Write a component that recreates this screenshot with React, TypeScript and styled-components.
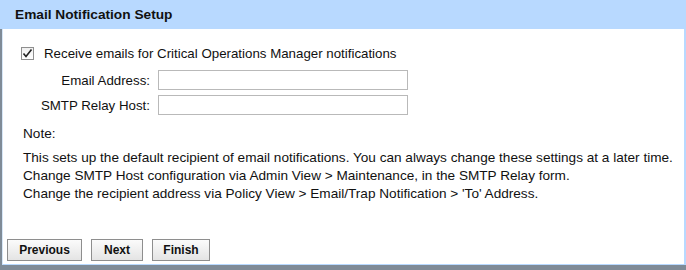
import React from "react";
import styled, { createGlobalStyle } from "styled-components";

const Global = createGlobalStyle`
  html, body { margin: 0; padding: 0; background: #c9ced4; }
  body { font-family: "Liberation Sans", Arial, sans-serif; }
`;

const Page = styled.div`
  width: 686px;
  height: 270px;
  display: flex;
  flex-direction: column;
  background: #7f8b97;
  overflow: hidden;
`;

const Panel = styled.div`
  margin-left: 2px;
  height: 265px;
  display: flex;
  flex-direction: column;
  background: #ffffff;
  border-left: 1px solid #d6e6f7;
  border-right: 2px solid #b8d9ff;
  border-bottom: 1px solid #b8d9ff;
  box-sizing: border-box;
`;

const Header = styled.div`
  height: 29px;
  margin-left: -3px;
  margin-right: -2px;
  padding-left: 15px;
  background: #b8d9ff;
  display: flex;
  align-items: center;
  font-weight: bold;
  font-size: 13.7px;
  color: #111;
`;

const Body = styled.div`
  flex: 1;
  display: flex;
  flex-direction: column;
  padding: 17px 0 0 11px;
  color: #111;
  font-size: 13.3px;
`;

const CheckRow = styled.label`
  display: flex;
  align-items: center;
  gap: 10px;
  padding-left: 7px;
  height: 14px;
`;

const Box = styled.span`
  width: 13px;
  height: 13px;
  box-sizing: border-box;
  border: 1px solid #8f8f8f;
  background: linear-gradient(#f0f0f0, #ffffff);
  display: flex;
  align-items: center;
  justify-content: center;
`;

const Fields = styled.div`
  display: grid;
  grid-template-columns: 136px 250px;
  column-gap: 8px;
  row-gap: 5px;
  margin-top: 10px;
  align-items: center;
`;

const Label = styled.span`
  text-align: right;
`;

const Input = styled.input`
  height: 20px;
  box-sizing: border-box;
  border: 1px solid #b9b9b9;
  background: #fff;
  padding: 0 3px;
  font: inherit;
`;

const Notes = styled.div`
  margin-top: 10px;
  margin-left: 9px;
  display: flex;
  flex-direction: column;
  white-space: nowrap;
  font-size: 13.6px;
`;

const NoteLine = styled.div`
  height: 18px;
  line-height: 18px;
`;

const NoteTitle = styled(NoteLine)`
  margin-bottom: 6px;
`;

const Buttons = styled.div`
  margin-top: auto;
  margin-left: -7px;
  margin-bottom: 3px;
  display: flex;
  gap: 9px;
`;

const Button = styled.button<{ $w: number }>`
  width: ${(p) => p.$w}px;
  height: 22px;
  box-sizing: border-box;
  border: 1px solid #8e8e8e;
  background: linear-gradient(#fbfbfb, #e4e4e4);
  font-family: "Liberation Sans", Arial, sans-serif;
  font-weight: bold;
  font-size: 12px;
  color: #111;
  padding: 0;
`;

export default function App() {
  return (
    <>
      <Global />
      <Page>
        <Panel>
          <Header>Email Notification Setup</Header>
          <Body>
            <CheckRow>
              <Box>
                <svg width="11" height="11" viewBox="0 0 11 11">
                  <path d="M1.5 5.5 L4 8.5 L9.5 1.5" fill="none" stroke="#222" strokeWidth="1.6" />
                </svg>
              </Box>
              Receive emails for Critical Operations Manager notifications
            </CheckRow>
            <Fields>
              <Label>Email Address:</Label>
              <Input />
              <Label>SMTP Relay Host:</Label>
              <Input />
            </Fields>
            <Notes>
              <NoteTitle>Note:</NoteTitle>
              <NoteLine>This sets up the default recipient of email notifications. You can always change these settings at a later time.</NoteLine>
              <NoteLine>Change SMTP Host configuration via Admin View &gt; Maintenance, in the SMTP Relay form.</NoteLine>
              <NoteLine>Change the recipient address via Policy View &gt; Email/Trap Notification &gt; 'To' Address.</NoteLine>
            </Notes>
            <Buttons>
              <Button $w={75}>Previous</Button>
              <Button $w={52}>Next</Button>
              <Button $w={58}>Finish</Button>
            </Buttons>
          </Body>
        </Panel>
      </Page>
    </>
  );
}
